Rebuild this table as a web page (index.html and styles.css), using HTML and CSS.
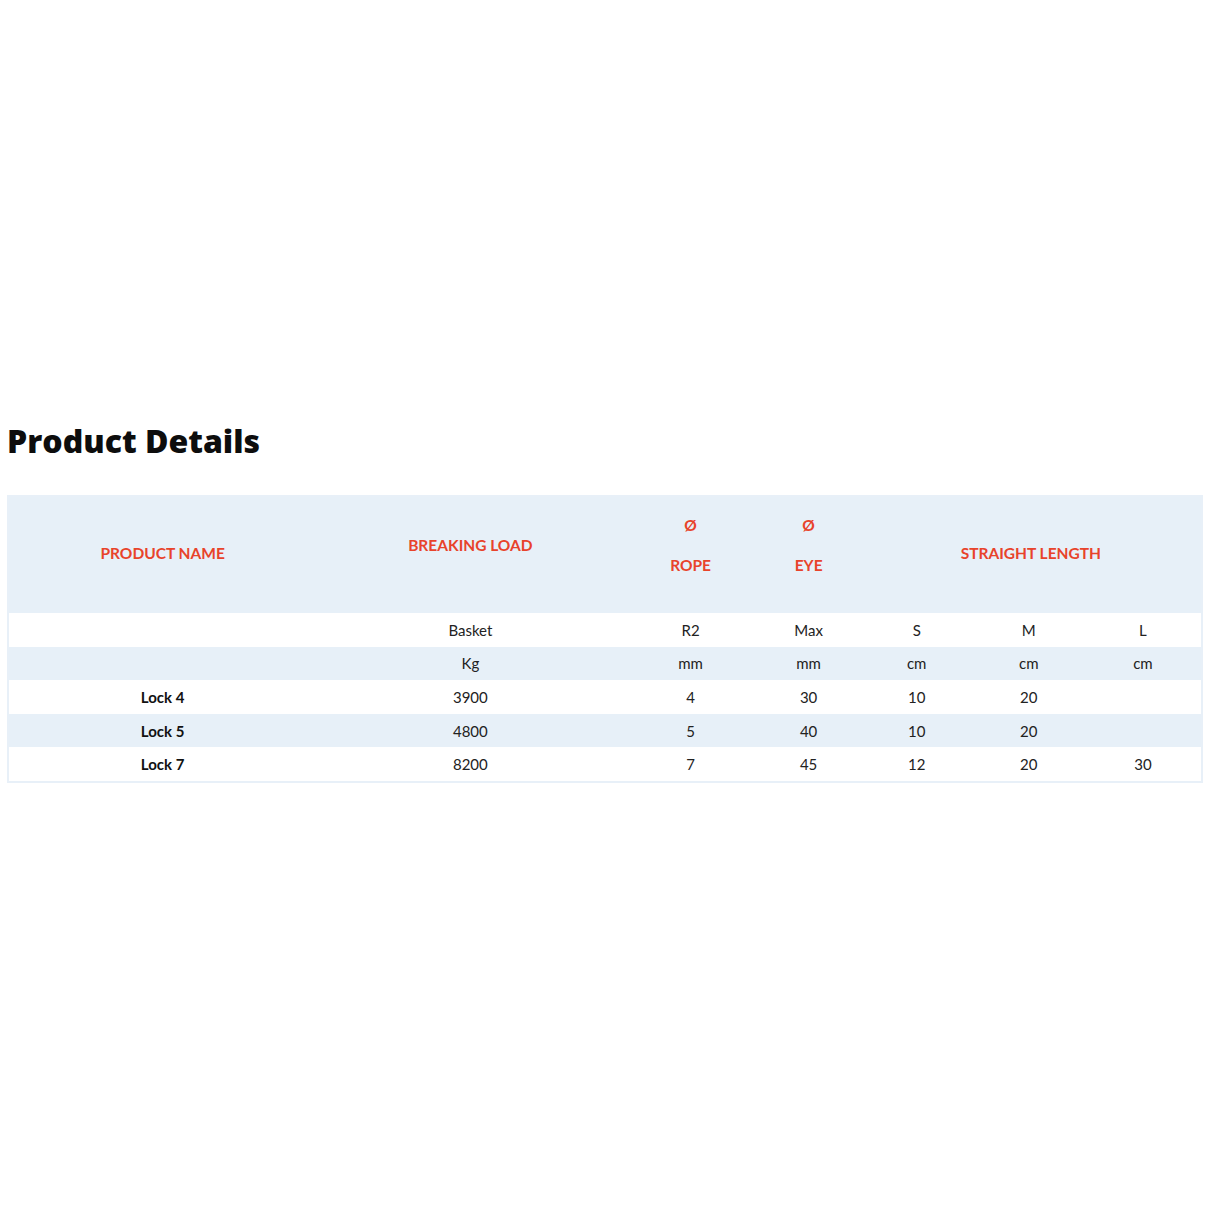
FILE: index.html
```html
<!DOCTYPE html>
<html lang="en">
<head>
<meta charset="utf-8">
<title>Product Details</title>
<link rel="stylesheet" href="styles.css">
</head>
<body>
<main class="page">
  <h2 class="title">Product Details</h2>
  <div class="table-wrap">
    <table class="specs">
      <colgroup>
        <col class="c1"><col class="c2"><col class="c3"><col class="c4"><col class="c5"><col class="c6"><col class="c7">
      </colgroup>
      <thead>
        <tr class="head">
          <th><p>PRODUCT NAME</p></th>
          <th class="lift"><p>BREAKING LOAD</p></th>
          <th class="stack lift"><p>Ø</p><p>ROPE</p></th>
          <th class="stack lift"><p>Ø</p><p>EYE</p></th>
          <th colspan="3"><p>STRAIGHT LENGTH</p></th>
        </tr>
      </thead>
      <tbody>
        <tr class="w"><td></td><td>Basket</td><td>R2</td><td>Max</td><td>S</td><td>M</td><td>L</td></tr>
        <tr class="b"><td></td><td>Kg</td><td>mm</td><td>mm</td><td>cm</td><td>cm</td><td>cm</td></tr>
        <tr class="w"><td class="name">Lock 4</td><td>3900</td><td>4</td><td>30</td><td>10</td><td>20</td><td></td></tr>
        <tr class="b"><td class="name">Lock 5</td><td>4800</td><td>5</td><td>40</td><td>10</td><td>20</td><td></td></tr>
        <tr class="w"><td class="name">Lock 7</td><td>8200</td><td>7</td><td>45</td><td>12</td><td>20</td><td>30</td></tr>
      </tbody>
    </table>
  </div>
</main>
</body>
</html>
```
FILE: styles.css
```css
html, body {
  margin: 0;
  padding: 0;
  background: #ffffff;
}
.page {
  padding: 421px 11px 0 7px;
  font-family: Lato, "Open Sans", Arial, sans-serif;
}
.title {
  margin: 0 0 34px 0;
  font-family: "Open Sans", Lato, Arial, sans-serif;
  font-weight: 800;
  font-size: 32px;
  line-height: 40px;
  color: #0d0d0d;
  letter-spacing: 0;
}
.table-wrap {
  border: 2px solid #e8f0f8;
}
.specs {
  width: 100%;
  border-collapse: collapse;
  table-layout: fixed;
}
.c1 { width: 307px; }
.c2 { width: 308px; }
.c3 { width: 132px; }
.c4 { width: 104px; }
.c5 { width: 112px; }
.c6 { width: 112px; }
.c7 { width: 116px; }
.head {
  background: #e7f0f8;
}
.head th {
  height: 112px;
  padding: 0 0 4px 0;
  vertical-align: middle;
  text-align: center;
  color: #e8432b;
  font-size: 15.5px;
  font-weight: 700;
  line-height: 18px;
}
.head th p {
  margin: 0;
}
.head .stack p + p {
  margin-top: 22px;
}
.head .lift p:last-child {
  margin-bottom: 16px;
}
.specs td {
  height: 33.6px;
  padding: 0;
  text-align: center;
  vertical-align: middle;
  font-size: 15px;
  color: #222222;
}
.w { background: #ffffff; }
.b { background: #e7f0f8; }
.specs td.name {
  font-weight: 700;
  color: #111111;
}
```
